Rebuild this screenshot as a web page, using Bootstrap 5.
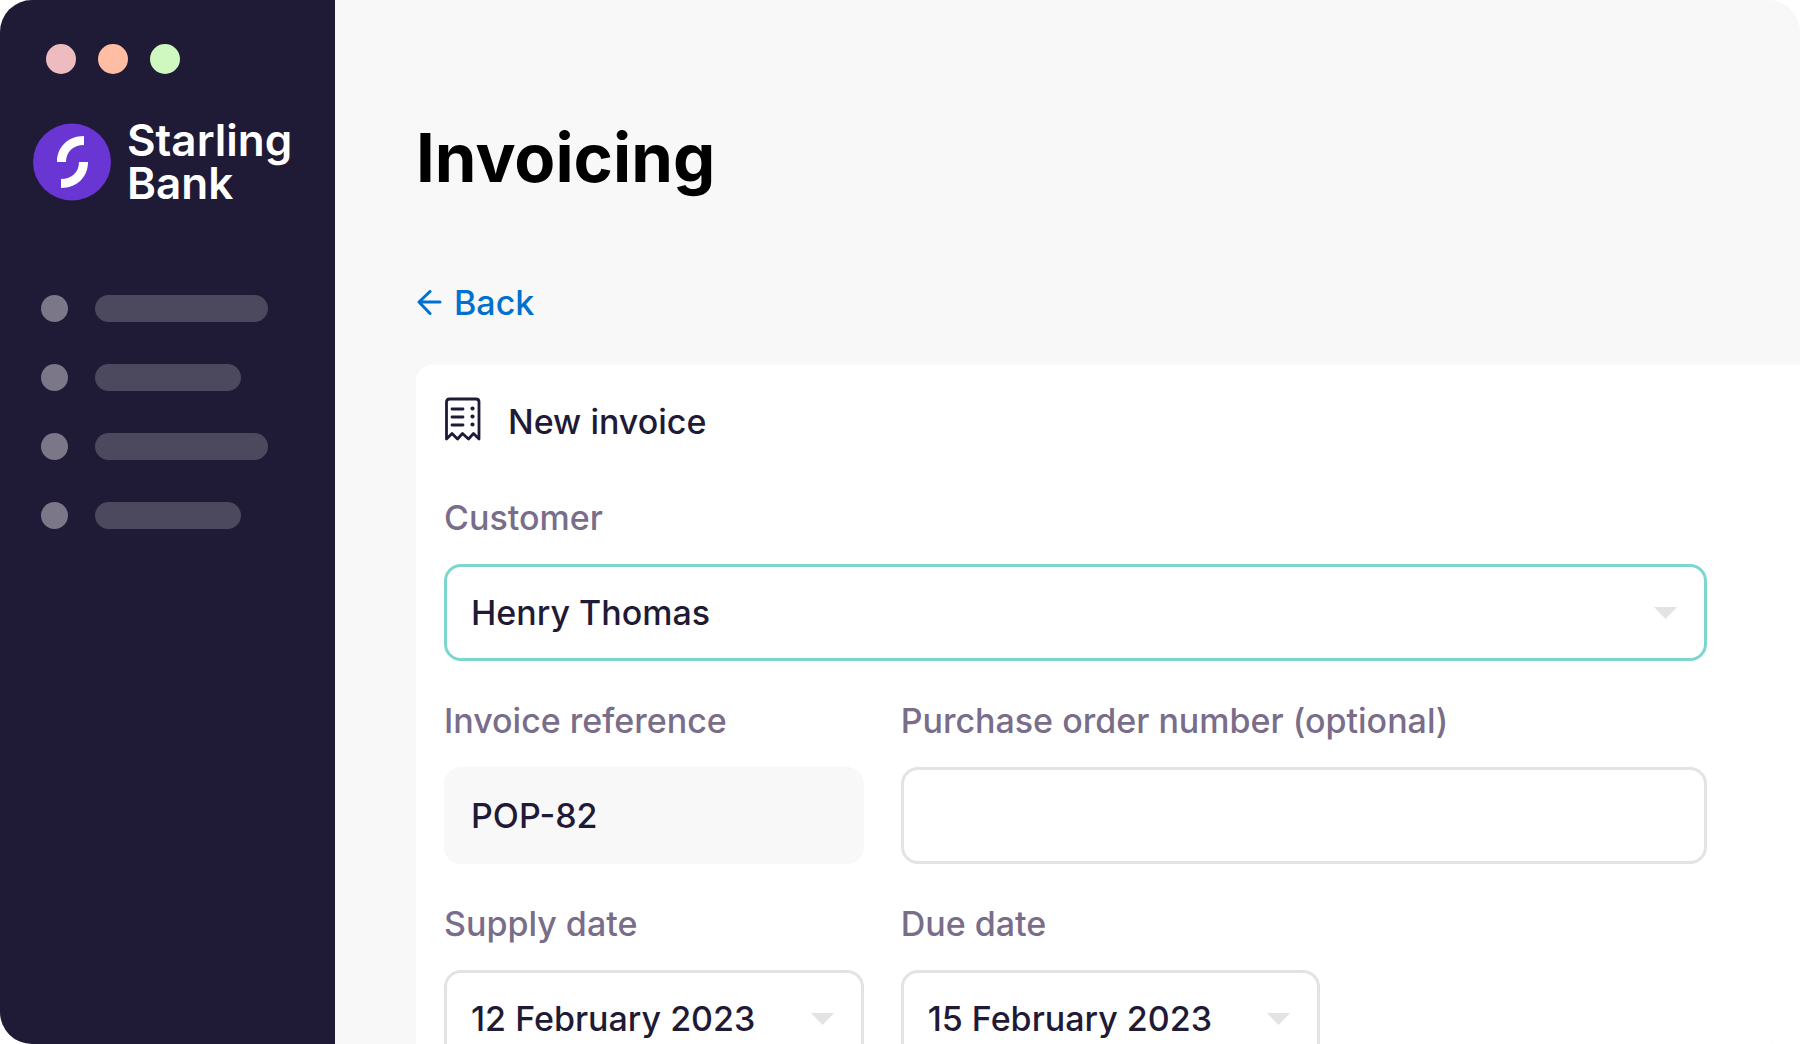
<!DOCTYPE html>
<html lang="en">
<head>
<meta charset="utf-8">
<meta name="viewport" content="width=device-width, initial-scale=1">
<title>Invoicing</title>
<link href="https://cdn.jsdelivr.net/npm/bootstrap@5.3.0/dist/css/bootstrap.min.css" rel="stylesheet">
<style>
  :root { --ink: #1f1a36; --label: #796d8a; --line: #e3e3e3; }
  body { font-family: Inter, "Liberation Sans", sans-serif; font-size: 34px; line-height: 40px; font-weight: 500; color: var(--ink); background: #fff; }
  .app-window { border-radius: 32px; background: #f8f8f8; }
  .side-panel { width: 335px; background: var(--ink); padding: 44px 32px 0 33px; }
  .window-dots { gap: 22px; padding-left: 13px; margin-bottom: 45px; }
  .window-dots span { width: 30px; height: 30px; }
  .dot-close { background: #eebbbf; }
  .dot-min { background: #ffbda3; }
  .dot-max { background: #cff7c0; }
  .brand { gap: 16px; font-size: 44px; line-height: 43px; font-weight: 600; margin-bottom: 90px; }
  .nav-stub { gap: 42px; padding-left: 8px; }
  .nav-stub li { gap: 27px; }
  .stub-dot { width: 27px; height: 27px; background: #7b7788; }
  .stub-bar { width: 146px; height: 27px; background: #4c485e; }
  .stub-wide { width: 173px; }
  .main-area { padding: 116px 0 0 81px; }
  .page-title { font-size: 67px; line-height: 84px; color: #000; margin-bottom: 83px; }
  .back-link { gap: 12px; color: #0071ce; margin-bottom: 42px; }
  .invoice-panel { border-radius: 16px 0 0 0; padding: 32px 93px 40px 28px; }
  .panel-heading { gap: 27px; margin-bottom: 56px; }
  .panel-heading h2 { font-size: 34px; line-height: 40px; }
  .field-grid { display: grid; grid-template-columns: 420fr 420fr 350fr; gap: 40px 37px; }
  .span-all { grid-column: 1 / -1; }
  .span-two { grid-column: 2 / -1; }
  .form-label { margin-bottom: 26px; color: var(--label); display: block; }
  .form-control, .form-select { height: 97px; border: 3px solid var(--line); border-radius: 17px; padding: 0 24px; font-size: 34px; line-height: 40px; font-weight: 500; color: var(--ink); background-color: #fff; }
  .form-select { background-image: url("data:image/svg+xml,%3Csvg xmlns='http://www.w3.org/2000/svg' viewBox='0 0 23 12'%3E%3Cpath d='M0 0h23L11.5 12z' fill='%23e3e3e3'/%3E%3C/svg%3E"); background-size: 23px 12px; background-position: right 27px center; padding-right: 60px; }
  .is-active { border-color: #7dd6ce; }
  .form-control[readonly] { background: #f8f8f8; border-color: #f8f8f8; }
</style>
</head>
<body>
<div class="app-window d-flex vh-100 overflow-hidden">
  <aside class="side-panel flex-shrink-0">
    <div class="window-dots d-flex">
      <span class="dot-close rounded-circle"></span>
      <span class="dot-min rounded-circle"></span>
      <span class="dot-max rounded-circle"></span>
    </div>
    <div class="brand d-flex align-items-center text-white">
      <svg class="flex-shrink-0" width="78" height="78" viewBox="0 0 78 78" aria-hidden="true">
        <ellipse cx="39" cy="39" rx="39" ry="38.500" fill="#6935d3"/>
        <path d="M24 39C24 24 35 13 51 13V22C40 22 33 29 33 39ZM55 39C55 54 44 65 28 65V56C39 56 46 49 46 39Z" fill="#fff"/>
      </svg>
      <div>Starling<br>Bank</div>
    </div>
    <ul class="nav-stub list-unstyled d-flex flex-column mb-0">
      <li class="d-flex"><span class="stub-dot rounded-circle"></span><span class="stub-bar stub-wide rounded-pill"></span></li>
      <li class="d-flex"><span class="stub-dot rounded-circle"></span><span class="stub-bar rounded-pill"></span></li>
      <li class="d-flex"><span class="stub-dot rounded-circle"></span><span class="stub-bar stub-wide rounded-pill"></span></li>
      <li class="d-flex"><span class="stub-dot rounded-circle"></span><span class="stub-bar rounded-pill"></span></li>
    </ul>
  </aside>
  <main class="main-area flex-grow-1">
    <h1 class="page-title fw-bold">Invoicing</h1>
    <div class="d-flex">
      <a class="back-link d-flex align-items-center text-decoration-none" href="#">
        <svg width="26" height="26" viewBox="0 0 26 26" fill="none" stroke="currentColor" stroke-width="3" stroke-linecap="round" stroke-linejoin="round" aria-hidden="true"><path d="M24 12H3M14 1.500L3 12L14 23.500"/></svg>
        Back
      </a>
    </div>
    <section class="invoice-panel bg-white">
      <div class="panel-heading d-flex align-items-end">
        <svg width="37" height="45" viewBox="0 0 37 45" fill="none" stroke="currentColor" stroke-width="2.800" stroke-linecap="round" stroke-linejoin="round" aria-hidden="true">
          <path d="M2.500 42V5Q2.500 2 5.500 2H32Q35 2 35 5V42L29.500 36.500L24.500 42L18.500 36.500L13.500 42L8 36.500Z"/>
          <path d="M8 12H19M8 20H19M8 28H19"/>
          <path d="M28.500 11.500h.01M28.500 19.500h.01M28.500 27.500h.01" stroke-width="4.200"/>
        </svg>
        <h2 class="fw-medium mb-0">New invoice</h2>
      </div>
      <form class="field-grid">
        <div class="span-all">
          <label class="form-label" for="customer">Customer</label>
          <select class="form-select is-active" id="customer"><option>Henry Thomas</option></select>
        </div>
        <div>
          <label class="form-label" for="reference">Invoice reference</label>
          <input class="form-control" id="reference" type="text" value="POP-82" readonly>
        </div>
        <div class="span-two">
          <label class="form-label" for="po">Purchase order number (optional)</label>
          <input class="form-control" id="po" type="text">
        </div>
        <div>
          <label class="form-label" for="supply">Supply date</label>
          <select class="form-select" id="supply"><option>12 February 2023</option></select>
        </div>
        <div>
          <label class="form-label" for="due">Due date</label>
          <select class="form-select" id="due"><option>15 February 2023</option></select>
        </div>
      </form>
    </section>
  </main>
</div>
<script src="https://cdn.jsdelivr.net/npm/bootstrap@5.3.0/dist/js/bootstrap.bundle.min.js"></script>
</body>
</html>
